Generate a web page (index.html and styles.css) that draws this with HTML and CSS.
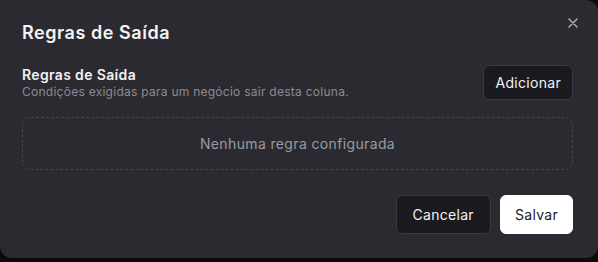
FILE: index.html
```html
<!DOCTYPE html>
<html lang="pt">
<head>
<meta charset="utf-8">
<link rel="stylesheet" href="styles.css">
</head>
<body>
<div class="dialog">
  <div class="header">
    <h2 class="title">Regras de Saída</h2>
    <button class="close" aria-label="Fechar">
      <svg width="10" height="10" viewBox="0 0 10 10"><path d="M1 1L9 9M9 1L1 9" stroke="#b4b4ba" stroke-width="1.4" stroke-linecap="round"/></svg>
    </button>
  </div>
  <div class="section">
    <div class="section-text">
      <div class="section-title">Regras de Saída</div>
      <div class="section-desc">Condições exigidas para um negócio sair desta coluna.</div>
    </div>
    <button class="btn btn-dark">Adicionar</button>
  </div>
  <div class="empty">Nenhuma regra configurada</div>
  <div class="footer">
    <button class="btn btn-dark btn-lg btn-cancel">Cancelar</button>
    <button class="btn btn-light btn-lg btn-save">Salvar</button>
  </div>
</div>
</body>
</html>
```

FILE: styles.css
```css
html, body {
  margin: 0;
  padding: 0;
  background: #0b0b0d;
  font-family: Inter, "Noto Sans", sans-serif;
  height: 262px;
  overflow: hidden;
}
.dialog {
  box-sizing: border-box;
  width: 598px;
  height: 258px;
  background: #2b2a30;
  border-radius: 0 12px 12px 12px;
  padding: 0 25px 0 22px;
  display: flex;
  flex-direction: column;
}
.header {
  display: flex;
  justify-content: space-between;
  align-items: flex-start;
  height: 65px;
}
.title {
  margin: 22px 0 0 0;
  font-size: 18px;
  font-weight: 600;
  color: #f4f4f6;
  letter-spacing: 0.55px;
}
.close {
  background: none;
  border: none;
  padding: 0;
  margin: 17px -6px 0 0;
  width: 12px;
  height: 12px;
  display: flex;
  align-items: center;
  justify-content: center;
}
.section {
  display: flex;
  justify-content: space-between;
  align-items: center;
}
.section-title {
  font-size: 14px;
  font-weight: 600;
  color: #f2f2f4;
  line-height: 17px;
  letter-spacing: 0.35px;
}
.section-desc {
  font-size: 12px;
  color: #8c8b92;
  line-height: 16px;
  margin-top: 1px;
  letter-spacing: 0.26px;
}
.btn {
  font-family: Inter, "Noto Sans", sans-serif;
  font-size: 14px;
  border-radius: 6px;
  cursor: pointer;
  letter-spacing: 0.3px;
}
.btn-dark {
  background: #1b1a1e;
  color: #f2f2f4;
  border: 1px solid #3a3940;
  height: 35px;
  padding: 0 11px;
}
.btn-light {
  background: #ffffff;
  color: #1b1a1e;
  border: 1px solid #ffffff;
}
.btn-lg {
  height: 39px;
}
.btn-cancel {
  padding: 0 16px;
}
.btn-save {
  padding: 0 14px;
}
.empty {
  margin-top: 17px;
  height: 53px;
  box-sizing: border-box;
  border: 1px dashed #46454c;
  border-radius: 9px;
  display: flex;
  align-items: center;
  justify-content: center;
  font-size: 14px;
  color: #9a9aa0;
  letter-spacing: 0.36px;
}
.footer {
  margin-top: 25px;
  display: flex;
  justify-content: flex-end;
  gap: 9px;
}
```
